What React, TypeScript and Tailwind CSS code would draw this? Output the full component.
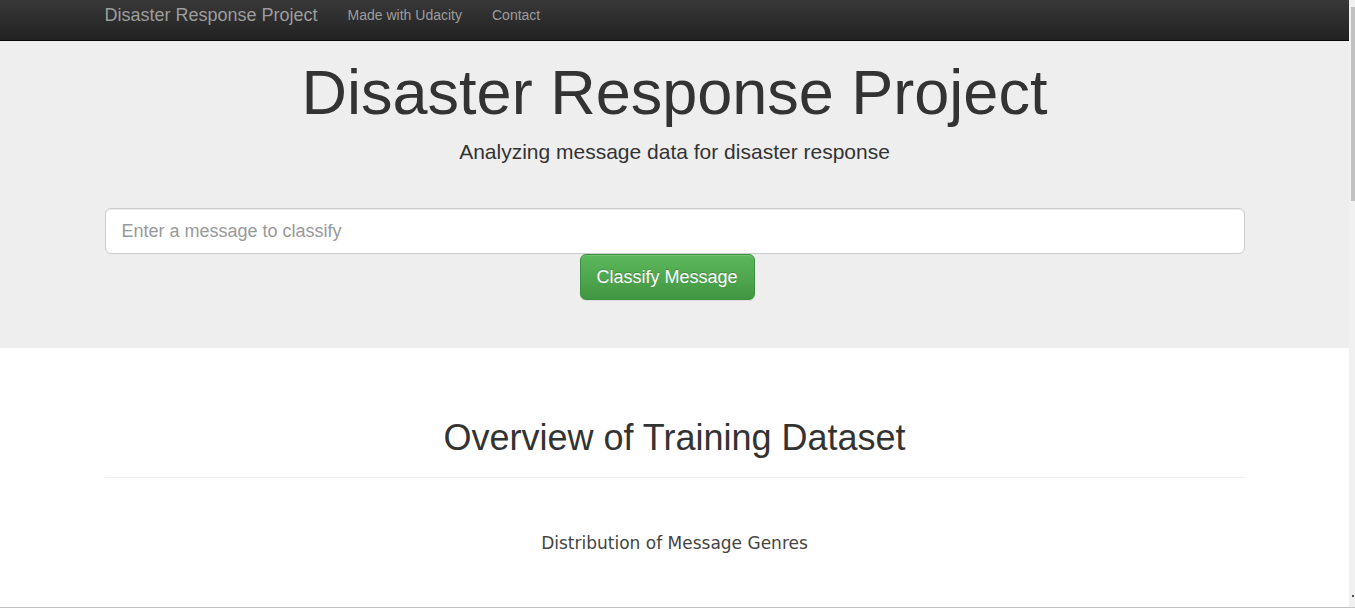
import React from "react";

const NavBar = () => (
  <nav className="h-[41px] border-b border-[#080808] bg-linear-to-b from-[#383838] to-[#222222]">
    <div className="w-[1140px] mx-auto flex items-start pt-[5px] text-[#9d9d9d]">
      <a className="text-[18px] leading-[20px] pr-[15px]">Disaster Response Project</a>
      <a className="text-[14px] leading-[20px] px-[15px]">Made with Udacity</a>
      <a className="text-[14px] leading-[20px] px-[15px]">Contact</a>
    </div>
  </nav>
);

const Jumbotron = () => (
  <div className="bg-[#eeeeee] pt-[17px] pb-[48px]">
    <div className="w-[1140px] mx-auto">
      <h1 className="text-center text-[63px] leading-[1.1] text-[#333]">Disaster Response Project</h1>
      <p className="text-center text-[21px] leading-[30px] mt-[10px] text-[#333]">
        Analyzing message data for disaster response
      </p>

      <div className="mt-[41px]">
        <input
          type="text"
          placeholder="Enter a message to classify"
          className="w-full h-[46px] px-[16px] text-[18px] text-[#555] bg-white border border-[#cccccc] rounded-[6px] shadow-[inset_0_1px_1px_rgba(0,0,0,0.075)] placeholder:text-[#999] outline-none"
        />
        <div className="pl-[475px]">
          <button className="h-[46px] px-[16px] text-[18px] text-white rounded-[6px] border border-[#3e8f3e] bg-linear-to-b from-[#5cb85c] to-[#419641] shadow-[inset_0_1px_0_rgba(255,255,255,0.15),0_1px_1px_rgba(0,0,0,0.075)] [text-shadow:0_-1px_0_rgba(0,0,0,0.2)]">
            Classify Message
          </button>
        </div>
      </div>
    </div>
  </div>
);

const Overview = () => (
  <div className="w-[1140px] mx-auto pt-[70px]">
    <div className="border-b border-[#eeeeee] pb-[9px]">
      <h1 className="text-center text-[36px] leading-[39.6px] mb-[10px] text-[#333]">
        Overview of Training Dataset
      </h1>
    </div>
    <div className="mt-[55px] text-center font-['DejaVu_Sans',Verdana,sans-serif] text-[17px] leading-[20px] text-[#444]">
      Distribution of Message Genres
    </div>
  </div>
);

export default function App() {
  return (
    <div className="h-[608px] overflow-hidden flex flex-col bg-white font-['Liberation_Sans',Arial,sans-serif]">
      <div className="flex flex-1 min-h-0">
        <div className="flex-1 min-w-0 overflow-hidden">
          <NavBar />
          <Jumbotron />
          <Overview />
        </div>
        {/* scrollbar strip */}
        <div className="w-[6px] bg-[#f1f1f1] pl-[2px] pt-[7px] flex flex-col justify-between">
          <div className="h-[194px] bg-[#c1c1c1]" />
          <div className="h-[2px] w-[2px] ml-[1px] mb-[10px] bg-[#505050]" />
        </div>
      </div>
      <div className="h-px bg-[#c4c4c4]" />
    </div>
  );
}
